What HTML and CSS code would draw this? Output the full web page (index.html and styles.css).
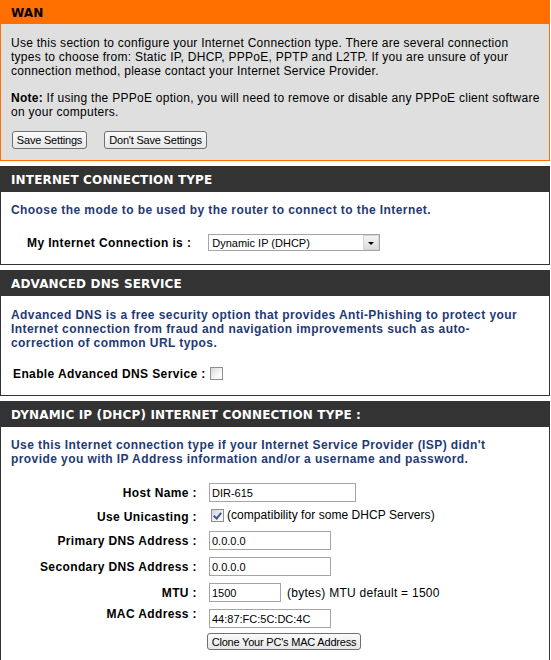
FILE: index.html
```html
<!DOCTYPE html>
<html lang="en">
<head>
    <meta charset="UTF-8">
    <meta name="viewport" content="width=device-width, initial-scale=1.0">
    <title>WAN</title>
    <link rel="stylesheet" href="styles.css">
</head>
<body>
    <div class="box box-wan">
        <h2>WAN</h2>
        <div class="box-body">
            <p>Use this section to configure your Internet Connection type. There are several connection<br>
            types to choose from: Static IP, DHCP, PPPoE, PPTP and L2TP. If you are unsure of your<br>
            connection method, please contact your Internet Service Provider.</p>
            <p class="note"><strong>Note:</strong> If using the PPPoE option, you will need to remove or disable any PPPoE client software<br>
            on your computers.</p>
            <div class="btn-row">
                <button type="button" class="btn btn-save">Save Settings</button>
                <button type="button" class="btn btn-nosave">Don't Save Settings</button>
            </div>
        </div>
    </div>

    <div class="box">
        <h2>Internet Connection Type</h2>
        <div class="box-body">
            <p class="intro">Choose the mode to be used by the router to connect to the Internet.</p>
            <div class="mode-row">
                <label for="wanType">My Internet Connection is :</label>
                <div class="select-wrap">
                    <select id="wanType">
                        <option>Dynamic IP (DHCP)</option>
                        <option>Static IP</option>
                        <option>PPPoE (Username / Password)</option>
                        <option>PPTP (Username / Password)</option>
                        <option>L2TP (Username / Password)</option>
                    </select>
                    <span class="select-arrow"></span>
                </div>
            </div>
        </div>
    </div>

    <div class="box">
        <h2>Advanced DNS Service</h2>
        <div class="box-body box-dns">
            <p class="intro">Advanced DNS is a free security option that provides Anti-Phishing to protect your<br>
            Internet connection from fraud and navigation improvements such as auto-<br>correction of common URL typos.</p>
            <div class="dns-row">
                <label for="advDns">Enable Advanced DNS Service :</label>
                <input type="checkbox" id="advDns" class="check">
            </div>
        </div>
    </div>

    <div class="box">
        <h2>Dynamic IP (DHCP) Internet Connection Type :</h2>
        <div class="box-body box-dhcp">
            <p class="intro">Use this Internet connection type if your Internet Service Provider (ISP) didn't<br>
            provide you with IP Address information and/or a username and password.</p>
            <div class="dhcp-form">
                <label for="hostName">Host Name :</label>
                <div class="field"><input type="text" id="hostName" class="input-wide" value="DIR-615"></div>

                <label for="unicast" class="label-unicast">Use Unicasting :</label>
                <div class="field field-unicast">
                    <input type="checkbox" id="unicast" class="check" checked>
                    <span>(compatibility for some DHCP Servers)</span>
                </div>

                <label for="dns1">Primary DNS Address :</label>
                <div class="field"><input type="text" id="dns1" class="input-mid" value="0.0.0.0"></div>

                <label for="dns2">Secondary DNS Address :</label>
                <div class="field"><input type="text" id="dns2" class="input-mid" value="0.0.0.0"></div>

                <label for="mtu">MTU :</label>
                <div class="field">
                    <input type="text" id="mtu" class="input-short" value="1500">
                    <span class="mtu-hint">(bytes) MTU default = 1500</span>
                </div>

                <label for="mac" class="label-mac">MAC Address :</label>
                <div class="field"><input type="text" id="mac" class="input-mid" value="44:87:FC:5C:DC:4C"></div>

                <span></span>
                <div class="field field-clone">
                    <button type="button" class="btn btn-clone">Clone Your PC's MAC Address</button>
                </div>
            </div>
        </div>
    </div>
</body>
</html>
```

FILE: styles.css
```css
* {
    margin: 0;
    padding: 0;
    box-sizing: border-box;
}

body {
    width: 550px;
    background-color: #fff;
    color: #000;
    font-family: 'Liberation Sans', Arial, sans-serif;
    font-size: 12px;
    line-height: 14px;
    letter-spacing: 0.27px;
}

.box {
    border: 1px solid #333;
    margin-bottom: 5px;
}

.box h2 {
    height: 25px;
    padding-left: 10px;
    background-color: #333;
    color: #fff;
    font-family: 'DejaVu Sans', Verdana, sans-serif;
    font-size: 12px;
    font-weight: bold;
    line-height: 26px;
    letter-spacing: 0.15px;
    text-transform: uppercase;
}

.box-body {
    padding: 11px 0 13px 10px;
}

.box-body p {
    white-space: nowrap;
}

.intro {
    color: #1f3a75;
    font-weight: bold;
    letter-spacing: 0.42px;
}

/* WAN */
.box-wan {
    border-color: #ff6f00;
    background-color: #dfdfdf;
}

.box-wan h2 {
    height: 23px;
    background-color: #ff6f00;
    color: #000;
    line-height: 24px;
    text-transform: none;
}

.box-wan .box-body {
    padding: 12px 0 11px 10px;
}

.box-wan p {
    margin-bottom: 13px;
}

.box-wan .note {
    margin-bottom: 12px;
}

.btn-row {
    display: flex;
    gap: 17px;
    padding-left: 1px;
}

.btn {
    height: 18px;
    border: 1px solid #707070;
    border-radius: 3px;
    background: linear-gradient(#fbfbfb, #e6e6e6);
    color: #000;
    font-family: 'Liberation Sans', Arial, sans-serif;
    font-size: 11px;
    letter-spacing: -0.2px;
    cursor: pointer;
}

.btn-save {
    width: 75px;
}

.btn-nosave {
    width: 103px;
}

.btn-clone {
    width: 154px;
    height: 17px;
}

/* connection type */
.mode-row {
    display: flex;
    align-items: center;
    gap: 17px;
    padding-left: 16px;
    margin-top: 17px;
}

.mode-row label,
.dns-row label,
.dhcp-form label {
    font-weight: bold;
    letter-spacing: 0.38px;
    white-space: nowrap;
}

.select-wrap {
    position: relative;
    width: 172px;
    height: 17px;
}

.select-wrap select {
    width: 100%;
    height: 100%;
    padding-left: 3px;
    border: 1px solid #a5a5a5;
    background-color: #fff;
    font-family: 'Liberation Sans', Arial, sans-serif;
    font-size: 11px;
    appearance: none;
    -webkit-appearance: none;
    border-radius: 0;
    outline: none;
}

.select-arrow {
    position: absolute;
    top: 1px;
    right: 1px;
    width: 16px;
    height: 15px;
    border: 1px solid #d4d4d4;
    background: linear-gradient(#f4f4f4, #dcdcdc);
    pointer-events: none;
}

.select-arrow::after {
    content: "";
    position: absolute;
    left: 4px;
    top: 6px;
    border-left: 3px solid transparent;
    border-right: 3px solid transparent;
    border-top: 3px solid #000;
}

/* advanced dns */
.box-dns {
    padding: 12px 0 14px 10px;
}

.dns-row {
    display: flex;
    align-items: center;
    gap: 4px;
    height: 15px;
    padding-left: 2px;
    margin-top: 16px;
}

.check {
    position: relative;
    flex: none;
    width: 13px;
    height: 13px;
    border: 1px solid #8f8f8f;
    background: linear-gradient(135deg, #d8d8d8, #fbfbfb 70%);
    appearance: none;
    -webkit-appearance: none;
    border-radius: 0;
    outline: none;
}

.check:checked {
    background: linear-gradient(135deg, #c9d2e4, #f4f6fb 70%);
}

.check:checked::after {
    content: "";
    position: absolute;
    left: 3px;
    top: 1px;
    width: 3px;
    height: 6px;
    border-right: 2px solid #44558e;
    border-bottom: 2px solid #44558e;
    transform: rotate(40deg);
}

/* dhcp */
.box-dhcp {
    padding-bottom: 15px;
}

.dhcp-form {
    display: grid;
    grid-template-columns: 186px auto;
    column-gap: 12px;
    row-gap: 7px;
    align-items: center;
    margin-top: 17px;
}

.dhcp-form label {
    text-align: right;
}

.field {
    display: flex;
    align-items: center;
    height: 19px;
}

.field input[type="text"] {
    height: 19px;
    padding-left: 2px;
    border: 1px solid #a5a5a5;
    font-family: 'Liberation Sans', Arial, sans-serif;
    font-size: 11px;
    outline: none;
}

.input-wide {
    width: 147px;
}

.input-mid {
    width: 122px;
}

.input-short {
    width: 72px;
}

.field-unicast {
    align-items: flex-start;
    height: 15px;
    letter-spacing: 0.05px;
}

.field-unicast .check {
    margin-left: 2px;
    margin-right: 3px;
}

.field-unicast span {
    line-height: 13px;
}

.mtu-hint {
    margin-left: 6px;
}

.label-mac {
    align-self: start;
    margin-top: -2px;
}

.field-clone {
    height: 17px;
    margin-top: -2px;
    margin-left: -2px;
}
```
